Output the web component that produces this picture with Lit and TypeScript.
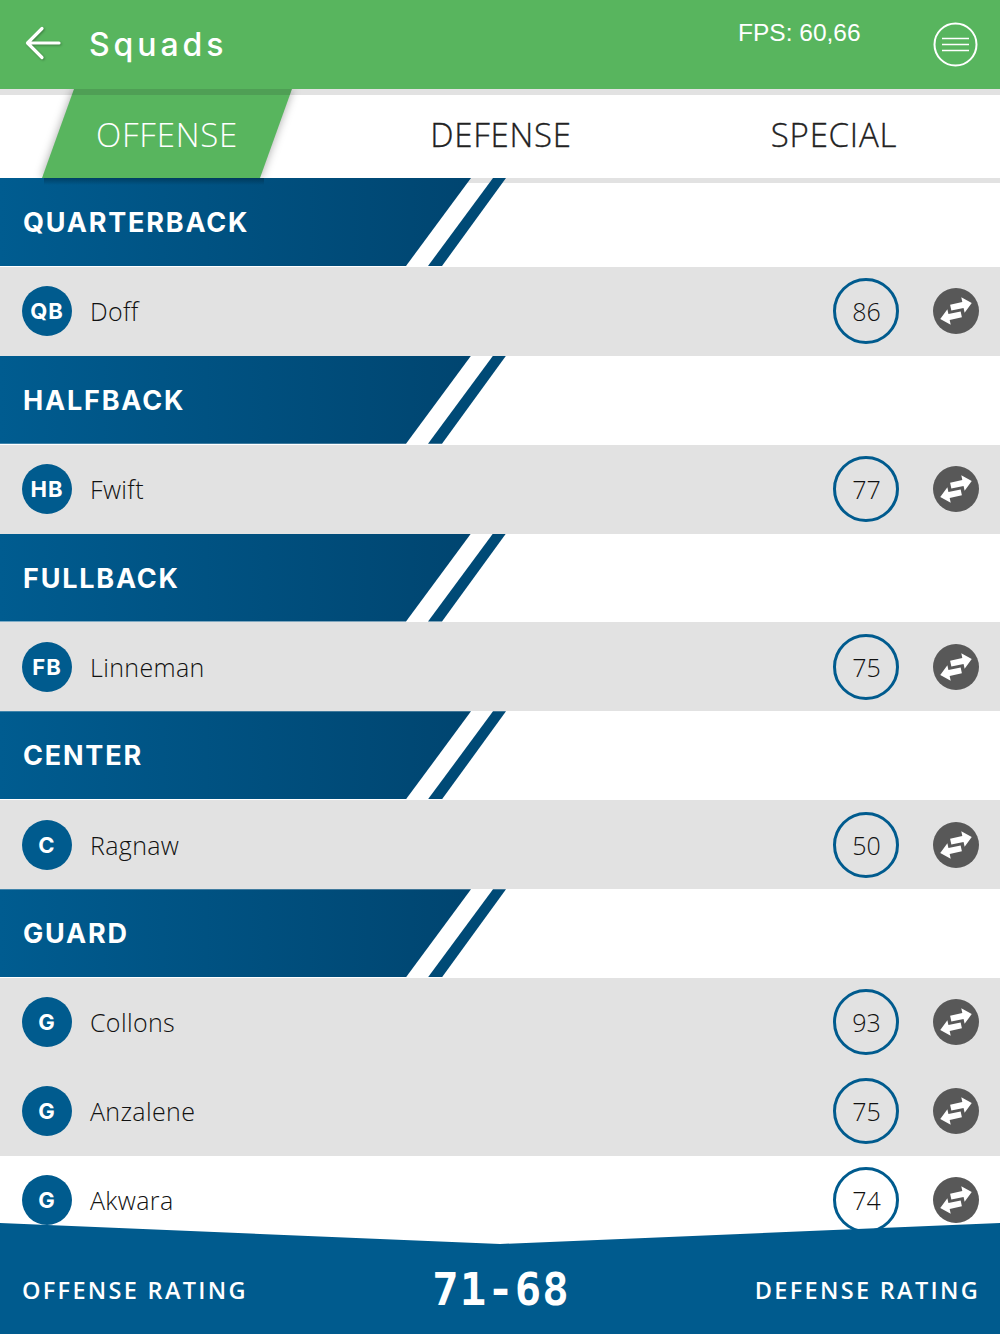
import { LitElement, html, css, svg } from "lit";
import { customElement } from "lit/decorators.js";

const groups = [
  { title: "QUARTERBACK", players: [{ pos: "QB", name: "Doff", rating: 86 }] },
  { title: "HALFBACK", players: [{ pos: "HB", name: "Fwift", rating: 77 }] },
  { title: "FULLBACK", players: [{ pos: "FB", name: "Linneman", rating: 75 }] },
  { title: "CENTER", players: [{ pos: "C", name: "Ragnaw", rating: 50 }] },
  {
    title: "GUARD",
    players: [
      { pos: "G", name: "Collons", rating: 93 },
      { pos: "G", name: "Anzalene", rating: 75 },
      { pos: "G", name: "Akwara", rating: 74, white: true },
    ],
  },
];

const swap = svg`<svg class="swap-svg" viewBox="0 0 46 46" width="46" height="46">
  <circle cx="23" cy="23" r="23" fill="#585858"/>
  <path transform="translate(27.500 17.500) rotate(-12)" d="M-10 -3H2.500V-8L11.500 0L2.500 8V3H-10Z" fill="#fff"/>
  <path transform="translate(18.500 28.500) rotate(-12)" d="M10 -3H-2.500V-8L-11.500 0L-2.500 8V3H10Z" fill="#fff"/>
</svg>`;

@customElement("app-root")
export class AppRoot extends LitElement {
  static styles = css`
    :host {
      display: block;
      position: relative;
      width: 1000px;
      height: 1334px;
      overflow: hidden;
      background: #fff;
      font-family: "Open Sans", sans-serif;
      color: #333;
    }
    .top {
      height: 89px;
      background: #58b55e;
      display: flex;
      align-items: center;
      color: #fff;
      position: relative;
      z-index: 3;
    }
    .back {
      margin-left: 25px;
      margin-bottom: 3px;
      width: 36px;
      height: 36px;
      display: block;
      filter: drop-shadow(1px 1px 1px rgba(0, 0, 0, 0.3));
    }
    .title {
      margin-left: 28px;
      font-family: Inter, sans-serif;
      font-weight: 500;
      font-size: 32px;
      letter-spacing: 3.900px;
    }
    .fps {
      position: absolute;
      left: 738px;
      top: 18px;
      font-family: "Liberation Sans", sans-serif;
      font-size: 24.500px;
      line-height: 30px;
    }
    .menu { position: absolute; left: 933px; top: 22px; width: 45px; height: 45px; }
    .tabs {
      height: 83px;
      border-top: 6px solid #e2e2e2;
      display: grid;
      grid-template-columns: 334px 334px 332px;
      background: #fff;
      position: relative;
      box-shadow: 0 5px 0 #e2e2e2;
      z-index: 1;
    }
    .tab {
      display: flex;
      align-items: center;
      justify-content: center;
      padding-bottom: 5px;
      font-size: 33px;
      font-weight: 300;
      color: #222;
      -webkit-text-stroke: 0.300px #222;
      position: relative;
      letter-spacing: 0.750px;
    }
    .tab span { position: relative; }
    .tab.on { color: #fff; -webkit-text-stroke: 0; }
    .shadow {
      position: absolute;
      left: 42px;
      top: -6px;
      width: 250px;
      height: 89px;
      filter: drop-shadow(0 0 5px rgba(0, 0, 0, 0.35));
    }
    .shape {
      width: 100%;
      height: 100%;
      background: linear-gradient(#4f9f55 0 6px, #58b55e 6px);
      clip-path: polygon(32px 0, 100% 0, 218px 100%, 0 100%);
    }
    .list { position: relative; z-index: 2; }
    .sec { height: 88.900px; position: relative; }
    .band {
      position: absolute;
      top: 0;
      left: 0;
      height: 88px;
      width: 471px;
      display: flex;
      align-items: center;
      padding: 1px 0 0 23px;
      box-sizing: border-box;
      background: linear-gradient(90deg, #005c90, #004570);
      clip-path: polygon(0 0, 100% 0, 406px 100%, 0 100%);
      color: #fff;
      font-family: Inter, sans-serif;
      font-weight: 700;
      font-size: 27px;
      letter-spacing: 1.800px;
    }
    .tabshade {
      position: absolute;
      left: 44px;
      top: 0;
      width: 220px;
      height: 7px;
      background: linear-gradient(rgba(0, 0, 0, 0.28), rgba(0, 0, 0, 0));
    }
    .stripe {
      position: absolute;
      left: 428px;
      top: 0;
      width: 78px;
      height: 88px;
      background: #004a76;
      clip-path: polygon(65px 0, 100% 0, 14px 100%, 0 100%);
    }
    .row {
      height: 88.900px;
      background: #e2e2e2;
      display: flex;
      align-items: center;
      padding: 0 21px 0 22px;
      position: relative;
    }
    .row.white { background: #fff; }
    .pos {
      width: 50px;
      height: 50px;
      border-radius: 50%;
      background: #005b8e;
      color: #fff;
      font-family: Inter, sans-serif;
      font-weight: 700;
      font-size: 22px;
      letter-spacing: 1px;
      display: flex;
      align-items: center;
      justify-content: center;
      flex: none;
    }
    .name { margin-left: 18px; font-size: 25px; font-weight: 300; letter-spacing: 0.350px; flex: 1; color: #111; }
    .rating {
      width: 66px;
      height: 66px;
      box-sizing: border-box;
      border: 3px solid #005b8e;
      border-radius: 50%;
      display: flex;
      align-items: center;
      justify-content: center;
      padding-left: 1px;
      font-size: 25px;
      font-weight: 300;
      color: #111;
      margin-right: 34px;
      flex: none;
    }
    .swap-svg { display: block; flex: none; }
    .foot {
      position: absolute;
      left: 0;
      right: 0;
      bottom: 0;
      height: 111px;
      background: #005b8e;
      clip-path: polygon(0 0, 50% 21px, 100% 0, 100% 100%, 0 100%);
      z-index: 4;
      color: #fff;
      display: grid;
      grid-template-columns: 1fr auto 1fr;
      align-items: center;
      padding: 22px 20px 0 22px;
      box-sizing: border-box;
    }
    .lab { font-size: 23.500px; font-weight: 600; letter-spacing: 2.300px; white-space: nowrap; }
    .lab.r { text-align: right; }
    .score {
      font-family: "DejaVu Sans Mono", monospace;
      font-weight: 700;
      font-size: 44px;
      line-height: 48px;
      letter-spacing: 1px;
    }
  `;

  render() {
    return html`
      <div class="top">
        <svg class="back" viewBox="0 0 36 36">
          <path d="M34 18H3M17 3.500 2.500 18 17 32.500" fill="none" stroke="#fff" stroke-width="3.200" stroke-linecap="round" stroke-linejoin="round"/>
        </svg>
        <div class="title">Squads</div>
        <div class="fps">FPS: 60,66</div>
        <svg class="menu" viewBox="0 0 45 45">
          <circle cx="22.500" cy="22.500" r="21" fill="none" stroke="#fff" stroke-width="2"/>
          <path d="M9 16.500h27M9 22.500h27M9 28.500h27" fill="none" stroke="#fff" stroke-width="1.500"/>
        </svg>
      </div>
      <div class="tabs">
        <div class="tab on"><div class="shadow"><div class="shape"></div></div><span>OFFENSE</span></div>
        <div class="tab"><span>DEFENSE</span></div>
        <div class="tab"><span>SPECIAL</span></div>
      </div>
      <div class="list">
        ${groups.map(
          (g, i) => html`
            <div class="sec">
              <div class="stripe"></div>
              <div class="band">${i === 0 ? html`<div class="tabshade"></div>` : ""}${g.title}</div>
            </div>
            ${g.players.map(
              (p: any) => html`
                <div class="row ${p.white ? "white" : ""}">
                  <div class="pos">${p.pos}</div>
                  <div class="name">${p.name}</div>
                  <div class="rating">${p.rating}</div>
                  ${swap}
                </div>
              `
            )}
          `
        )}
      </div>
      <div class="foot">
        <div class="lab">OFFENSE RATING</div>
        <div class="score">71-68</div>
        <div class="lab r">DEFENSE RATING</div>
      </div>
    `;
  }
}
